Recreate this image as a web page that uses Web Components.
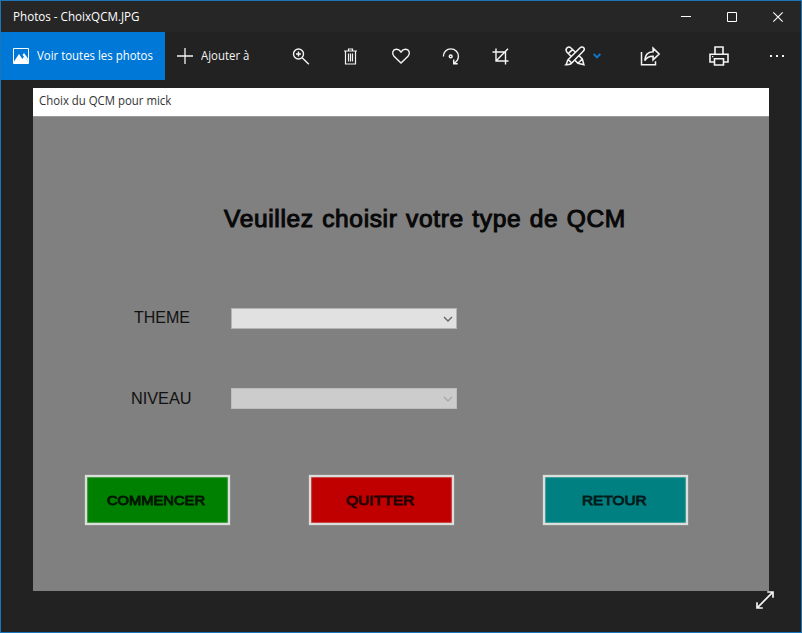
<!DOCTYPE html>
<html lang="fr"><head><meta charset="utf-8"><title>Photos - ChoixQCM.JPG</title>
<style>
html,body{margin:0;height:100%;background:#222;overflow:hidden}
</style></head><body>
<photos-window></photos-window>
<script>
const define=(name,html,after)=>{
  const t=document.createElement('template');t.innerHTML=html;
  customElements.define(name,class extends HTMLElement{
    constructor(){super();this.attachShadow({mode:'open'}).append(t.content.cloneNode(true));}
    connectedCallback(){if(after)after(this,this.shadowRoot);}
  });
};

// Text run condensed or widened to the width given by its "w" attribute.
define('fit-text',`<style>:host{display:block;white-space:nowrap;flex:none}span{display:inline-block;transform-origin:0 50%}</style><span><slot></slot></span>`,
(el,root)=>{
  const w=+el.getAttribute('w'),s=root.querySelector('span');
  el.style.width=w+'px';
  s.style.transform='scaleX('+(w/s.offsetWidth)+')';
});

const icons={
 picture:[16,16,'<path d="M.5.5h15v15H.5z"/><path d="M1 13.500 6 6l3.400 5L11 8.600l4 5V15H1z" fill="currentColor" stroke="none"/><path d="m9.500 7 1.500-2L15 10.500v2.700z" fill="currentColor" stroke="none"/>'],
 plus:[16,16,'<path d="M8 0v16M0 8h16" stroke-width="1.300"/>'],
 zoom:[17,17,'<circle cx="6" cy="6" r="5" stroke-width="1.400"/><path d="M9.700 9.700l6.600 6.600M6 3.500v5M3.500 6h5" stroke-width="1.400"/>'],
 trash:[13,17,'<path d="M0 3h13M4.500 3V1h4v2M1.500 3v13h10V3M4.500 5.500v8M6.500 5.500v8M8.500 5.500v8" stroke-width="1.200"/>'],
 heart:[18,16,'<path d="M9 15 2 8.200C-.6 5.200.8 1.500 4.300 1.300 6.500 1.200 8 2.600 9 4c1-1.400 2.500-2.800 4.700-2.700C17.200 1.500 18.600 5.200 16 8.200z" stroke-width="1.400"/>'],
 rotate:[17,17,'<path d="M.9 8.500C.8 3.900 4.300.9 8.300.9c4.300 0 7.600 3.100 7.600 7.300 0 2.800-1.700 5.500-4.700 7M11.200 11.500v4.300h4" stroke-width="1.400"/><circle cx="8.200" cy="8.400" r="1.400" stroke-width="1.500"/>'],
 crop:[16,17,'<path d="M0 4h13v12.500M3.500 .5V13H16M3.500 13 15.500 .8" stroke-width="1.400"/>'],
 edit:[20,20,'<path d="M1.800 5.900c-1-1.300-.9-2.900.2-4 1.200-1 2.900-1 4 .2L17.300 13l1.600 5.800-6-1.500zM17.300 13l-4.400 4.300M3.300 7.600l4.300-4.200"/><path d="M6.800 16.900C5.700 18.700 3.300 18.800.9 18.700c1.500-1.300.8-3.300 2.100-4.900L15.100 1.700c1-1 2.600-1.100 3.500-.2.900 1 .8 2.500-.2 3.500zM3.200 13.600l3.500 3.400" fill="#222"/>','1.500'],
 down:[8,6,'<path d="m.7 1 3.300 3.300L7.300 1" stroke-width="1.900"/>'],
 share:[20,19,'<path d="M1 5v12.800h14V14.300" stroke-width="1.500"/><path d="M4.300 13.500C4.500 8 7.300 4.800 12.600 4.700V1.200l6 5.800-6 5.800V9.300C9 9.200 6.200 10.200 4.300 13.500z" stroke-width="1.600"/>'],
 print:[20,20,'<path d="M6 8V1h8v7M5.500 16H1V8.200h18V16h-4.500M5.500 12.800h9v6.200h-9z" stroke-width="1.600"/><path d="M3 10.700h1.300" stroke-width="1.300"/>'],
 more:[16,4,'<path d="M1 1h2v2H1zM7 1h2v2H7zM13 1h2v2h-2z" fill="currentColor" stroke="none"/>'],
 min:[10,10,'<path d="M0 4.500h10"/>'],
 max:[10,10,'<path d="M.5.5h9v9h-9z"/>'],
 close:[10,10,'<path d="m.3.300 9.400 9.400M9.700.3.300 9.700" stroke-width="1.100"/>'],
 expand:[18,18,'<path d="M1.200 16.800 16.800 1.200M11.200 1H17v5.800M1 11.200V17h5.800" stroke-width="1.700"/>'],
 caret:[10,6,'<path d="m1 1 4 4 4-4" stroke-width="1.400"/>']
};
define('ui-icon',`<style>:host{display:block;flex:none}svg{display:block;overflow:visible}</style><div></div>`,
(el,root)=>{
  const [w,h,p,sw]=icons[el.getAttribute('name')];
  root.querySelector('div').innerHTML=`<svg width="${w}" height="${h}" viewBox="0 0 ${w} ${h}" fill="none" stroke="currentColor" stroke-width="${sw||1}">${p}</svg>`;
});

define('title-bar',`<style>
:host{display:flex;height:31px;background:#262626;color:#fff;align-items:center;padding-left:12px}
fit-text{flex:none;margin-right:auto}
.b{width:46px;height:30px;display:grid;place-items:center}
</style><fit-text w="127"><slot></slot></fit-text>
<div class="b"><ui-icon name="min"></ui-icon></div><div class="b"><ui-icon name="max"></ui-icon></div><div class="b"><ui-icon name="close"></ui-icon></div>`);

define('tool-bar',`<style>
:host{display:flex;height:48px;background:#222;color:#f4f4f4;align-items:center}
.all{background:#0078d7;width:164px;height:48px;display:flex;align-items:center;padding-left:12px;gap:8px;box-sizing:border-box;color:#fff}
.add{width:111px;display:flex;align-items:center;padding-left:12px;gap:8px;box-sizing:border-box}
.c{width:50px;display:grid;place-items:center}
.edit{width:63px;display:flex;align-items:center;gap:8px;padding-left:40px;}
.edit .d{color:#0f78cc}
.s{width:70px;margin-left:-13px}.p{width:68px}.m{width:48px}
.n{transform:translateX(.5px)}
</style>
<div class="all"><ui-icon name="picture"></ui-icon><fit-text w="116">Voir toutes les photos</fit-text></div>
<div class="add"><ui-icon name="plus"></ui-icon><fit-text w="48.500">Ajouter à</fit-text></div>
<div class="c n"><ui-icon name="zoom"></ui-icon></div><div class="c"><ui-icon name="trash"></ui-icon></div><div class="c"><ui-icon name="heart"></ui-icon></div><div class="c n"><ui-icon name="rotate"></ui-icon></div><div class="c n"><ui-icon name="crop"></ui-icon></div>
<div class="edit"><ui-icon name="edit"></ui-icon><ui-icon class="d" name="down"></ui-icon></div>
<div class="c s n"><ui-icon name="share"></ui-icon></div><div class="c p"><ui-icon name="print"></ui-icon></div><div class="c m"><ui-icon name="more"></ui-icon></div>`);

define('combo-box',`<style>
:host{display:flex;box-sizing:border-box;width:226px;height:21px;border:1px solid #b4b4b4;background:#e1e1e1;color:#666;align-items:center;justify-content:flex-end;padding-right:3px}
:host([disabled]){background:#ccc;color:#aaa;border-color:#bcbcbc;height:21px}
</style><ui-icon name="caret"></ui-icon>`);

define('form-field',`<style>
:host{display:grid;grid-template-columns:198px 227px;align-items:center;height:21px;font:16px/20px "Liberation Sans",sans-serif;color:#111}
.l{display:flex;justify-content:center;padding-left:60px;margin-top:-2px}
:host([second]) .l{margin-top:0;padding-left:59px}
</style><div class="l"><slot name="label"></slot></div><slot></slot>`);

define('flat-button',`<style>
:host{display:flex;box-sizing:border-box;width:145px;height:50px;border:2px solid #dcdedc;align-items:center;justify-content:center;background:var(--bg);color:var(--fg);box-shadow:0 0 1px 0 #ccc,inset 0 0 1px .5px rgba(220,225,220,.6);font:13.500px/20px "Liberation Sans",sans-serif;-webkit-text-stroke:.9px var(--fg);padding:1px 3px 0 0}
</style><slot></slot>`);

define('quiz-form',`<style>
:host{display:flex;flex-direction:column;width:736px;height:503px;background:#808080}
header{height:29px;flex:none;background:#fff;color:#333;display:flex;align-items:center;padding:0 6px 2px;box-sizing:border-box;border-bottom:1px solid #999}
h1{margin:87px 0 0 191px;height:30px;font:23px/30px "Liberation Sans",sans-serif;letter-spacing:.6px;word-spacing:1px;color:#080808;-webkit-text-stroke:1px #080808}
.one{margin-top:74px}.two{margin-top:59px}
.row{display:grid;grid-template-columns:145px 145px 145px;margin:66px 0 0 51.500px;column-gap:79.500px}
.row :nth-child(3){margin-left:9.500px;margin-right:-9.500px}
</style>
<header><fit-text w="132">Choix du QCM pour mick</fit-text></header>
<h1><fit-text w="402">Veuillez choisir votre type de QCM</fit-text></h1>
<form-field class="one"><fit-text slot="label" w="56">THEME</fit-text><combo-box></combo-box></form-field>
<form-field class="two" second><fit-text slot="label" w="61">NIVEAU</fit-text><combo-box disabled></combo-box></form-field>
<div class="row">
<flat-button style="--bg:#008000;--fg:#001800"><fit-text w="98">COMMENCER</fit-text></flat-button>
<flat-button style="--bg:#c00000;--fg:#260000"><fit-text w="68">QUITTER</fit-text></flat-button>
<flat-button style="--bg:#008080;--fg:#001c1c"><fit-text w="65">RETOUR</fit-text></flat-button>
</div>`);

define('photos-window',`<style>
:host{display:flex;flex-direction:column;box-sizing:border-box;width:802px;height:633px;border:1px solid #1b75ba;background:#222;font:12px/16px "Open Sans","Noto Sans",sans-serif;position:relative}
quiz-form{margin:8px 0 0 32px}
.x{position:absolute;left:755px;top:590px;color:#f2f2f2}
</style>
<title-bar>Photos - ChoixQCM.JPG</title-bar><tool-bar></tool-bar><quiz-form></quiz-form><ui-icon class="x" name="expand"></ui-icon>`);
</script></body></html>
